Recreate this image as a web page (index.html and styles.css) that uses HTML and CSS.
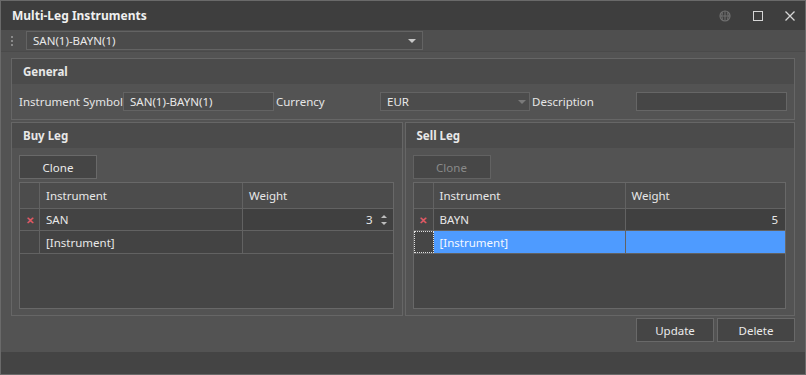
FILE: index.html
```html
<!DOCTYPE html>
<html lang="en">
<head>
    <meta charset="UTF-8">
    <title>Multi-Leg Instruments</title>
    <link rel="stylesheet" href="styles.css">
</head>
<body>
    <div class="window">
        <div class="titlebar">
            <span class="title">Multi-Leg Instruments</span>
            <div class="title-buttons">
                <svg width="12" height="12" viewBox="0 0 12 12" class="ico-globe">
                    <circle cx="6" cy="6" r="5" fill="none" stroke="#6f6f6f" stroke-width="1.2"/>
                    <path d="M1 6h10M6 1v10M3.5 2.5q-1.5 3.5 0 7M8.5 2.5q1.5 3.5 0 7" fill="none" stroke="#6f6f6f" stroke-width="1"/>
                </svg>
                <svg width="10" height="10" viewBox="0 0 10 10">
                    <rect x="0.5" y="0.5" width="9" height="9" fill="none" stroke="#d6d6d6" stroke-width="1"/>
                </svg>
                <svg width="10" height="10" viewBox="0 0 10 10">
                    <path d="M0.5 0.5l9 9M9.5 0.5l-9 9" stroke="#d6d6d6" stroke-width="1.3"/>
                </svg>
            </div>
        </div>

        <div class="toolbar">
            <span class="grip"><i></i><i></i><i></i></span>
            <div class="combo toolbar-combo">
                <span>SAN(1)-BAYN(1)</span>
                <span class="arrow"></span>
            </div>
        </div>

        <div class="content">
            <div class="group">
                <div class="group-header">General</div>
                <div class="general-row">
                    <label class="lbl lbl-symbol">Instrument Symbol</label>
                    <div class="edit">SAN(1)-BAYN(1)</div>
                    <label class="lbl lbl-currency">Currency</label>
                    <div class="combo currency-combo">
                        <span>EUR</span>
                        <span class="arrow dim"></span>
                    </div>
                    <label class="lbl lbl-desc">Description</label>
                    <div class="edit desc"></div>
                </div>
            </div>

            <div class="legs">
                <div class="group leg buy">
                    <div class="group-header">Buy Leg</div>
                    <div class="leg-body">
                        <button class="btn">Clone</button>
                        <div class="grid">
                            <div class="grid-row head">
                                <div class="cell ind"></div>
                                <div class="cell inst">Instrument</div>
                                <div class="cell weight">Weight</div>
                            </div>
                            <div class="grid-row">
                                <div class="cell ind"><span class="del">✕</span></div>
                                <div class="cell inst">SAN</div>
                                <div class="cell weight num">3
                                    <span class="spin"><span class="up"></span><span class="down"></span></span>
                                </div>
                            </div>
                            <div class="grid-row new">
                                <div class="cell ind"></div>
                                <div class="cell inst">[Instrument]</div>
                                <div class="cell weight"></div>
                            </div>
                        </div>
                    </div>
                </div>

                <div class="group leg sell">
                    <div class="group-header">Sell Leg</div>
                    <div class="leg-body">
                        <button class="btn" disabled>Clone</button>
                        <div class="grid">
                            <div class="grid-row head">
                                <div class="cell ind"></div>
                                <div class="cell inst">Instrument</div>
                                <div class="cell weight">Weight</div>
                            </div>
                            <div class="grid-row">
                                <div class="cell ind"><span class="del">✕</span></div>
                                <div class="cell inst">BAYN</div>
                                <div class="cell weight num">5</div>
                            </div>
                            <div class="grid-row new selected">
                                <div class="cell ind focus"></div>
                                <div class="cell inst">[Instrument]</div>
                                <div class="cell weight"></div>
                            </div>
                        </div>
                    </div>
                </div>
            </div>

            <div class="actions">
                <button class="btn">Update</button>
                <button class="btn">Delete</button>
            </div>
        </div>

        <div class="statusbar"></div>
    </div>
</body>
</html>
```

FILE: styles.css
```css
body {
    margin: 0;
    background: #3c3c3c;
    font-family: "Noto Sans", "Open Sans", sans-serif;
    font-size: 11.5px;
    color: #e8e8e8;
}
.window {
    width: 806px;
    height: 375px;
    box-sizing: border-box;
    border: 1px solid #6a6a6a;
    background: #535353;
    display: flex;
    flex-direction: column;
    white-space: nowrap;
}
.titlebar {
    height: 29px;
    flex: none;
    background: #3e3e3e;
    display: flex;
    align-items: center;
    justify-content: space-between;
    padding-left: 11px;
    box-sizing: border-box;
}
.title {
    font-weight: bold;
    font-size: 12px;
    color: #f0f0f0;
}
.title-buttons {
    display: flex;
    align-items: center;
    gap: 22px;
    padding-right: 10px;
}
.toolbar {
    height: 21px;
    flex: none;
    background: #4f4f4f;
    display: flex;
    align-items: center;
    border-bottom: 1px solid #4a4a4a;
}
.grip {
    width: 25px;
    display: flex;
    flex-direction: column;
    align-items: center;
    gap: 2px;
    padding-right: 3px;
    box-sizing: border-box;
}
.grip i {
    width: 2px;
    height: 2px;
    background: #8a8a8a;
}
.combo {
    display: flex;
    align-items: center;
    justify-content: space-between;
    box-sizing: border-box;
    border: 1px solid #636363;
    background: #4a4a4a;
    padding: 0 6px 0 6px;
}
.toolbar-combo {
    width: 397px;
    height: 19px;
    background: #4b4b4b;
}
.arrow {
    width: 0;
    height: 0;
    border-left: 4px solid transparent;
    border-right: 4px solid transparent;
    border-top: 4px solid #c8c8c8;
}
.arrow.dim {
    border-top-color: #7a7a7a;
}
.content {
    flex: 1;
    padding: 6px 10px 0 10px;
    display: flex;
    flex-direction: column;
}
.group {
    border: 1px solid #666;
    box-sizing: border-box;
}
.group-header {
    height: 25px;
    background: #4b4b4b;
    font-weight: bold;
    padding-left: 11px;
    display: flex;
    align-items: center;
}
.general-row {
    height: 35px;
    display: flex;
    align-items: center;
    padding-left: 7px;
}
.lbl {
    color: #e6e6e6;
    box-sizing: border-box;
    flex: none;
}
.lbl-symbol { width: 104px; }
.lbl-currency { width: 106px; padding-left: 2px; }
.lbl-desc { width: 106px; padding-left: 2px; }
.edit {
    width: 151px;
    height: 19px;
    flex: none;
    box-sizing: border-box;
    border: 1px solid #636363;
    background: #4c4c4c;
    padding-left: 6px;
    display: flex;
    align-items: center;
}
.edit.desc {
    background: #464646;
    border-color: #666;
}
.currency-combo {
    width: 150px;
    height: 19px;
    flex: none;
    background: #4c4c4c;
    padding-right: 3px;
}
.legs {
    display: flex;
    gap: 2px;
    margin-top: 2px;
}
.leg {
    height: 194px;
}
.buy { width: 392px; }
.sell { width: 391px; }
.leg-body {
    padding: 7px 8px 7px 7px;
    display: flex;
    flex-direction: column;
    align-items: flex-start;
    gap: 3px;
}
.btn {
    width: 78px;
    height: 24px;
    box-sizing: border-box;
    background: #454545;
    border: 1px solid #696969;
    color: #ebebeb;
    font-family: "Noto Sans", "Open Sans", sans-serif;
    font-size: 11.5px;
    padding: 0;
}
.btn:disabled {
    color: #8a8a8a;
    background: #474747;
    border-color: #626262;
}
.grid {
    align-self: stretch;
    height: 127px;
    box-sizing: border-box;
    border: 1px solid #686868;
    background: #464646;
}
.grid-row {
    display: flex;
    height: 21px;
    border-bottom: 1px solid #626262;
}
.grid-row.head {
    height: 25px;
    background: #4c4c4c;
}
.grid-row.new {
    height: 22px;
}
.cell {
    display: flex;
    align-items: center;
    padding-left: 6px;
    box-sizing: border-box;
    border-right: 1px solid #626262;
}
.cell.ind {
    width: 20px;
    flex: none;
    padding: 0;
    justify-content: center;
}
.buy .cell.inst { width: 203px; }
.sell .cell.inst { width: 192px; }
.cell.weight {
    flex: 1;
    border-right: none;
}
.cell.num {
    justify-content: flex-end;
    padding-right: 7px;
    background: #404040;
}
.buy .cell.num {
    padding-right: 6px;
}
.grid-row:not(.head) .cell.inst {
    background: #434343;
}
.grid-row.new .cell {
    background: #464646;
}
.del {
    color: #e05a66;
    font-size: 10px;
    font-weight: bold;
}
.spin {
    display: flex;
    flex-direction: column;
    gap: 4px;
    margin-left: 8px;
}
.spin span {
    width: 0;
    height: 0;
    border-left: 3px solid transparent;
    border-right: 3px solid transparent;
}
.spin .up { border-bottom: 3px solid #bdbdbd; }
.spin .down { border-top: 3px solid #bdbdbd; }
.grid-row.selected .cell.inst,
.grid-row.selected .cell.weight {
    background: #4e9bff;
    color: #f4f8ff;
}
.grid-row.selected .cell.ind {
    border: 1px dotted #e0e0e0;
    background: #464646;
}
.actions {
    display: flex;
    justify-content: flex-end;
    gap: 3px;
    margin-top: 2px;
}
.statusbar {
    height: 22px;
    flex: none;
    background: #444;
    margin-top: 7px;
}
```
